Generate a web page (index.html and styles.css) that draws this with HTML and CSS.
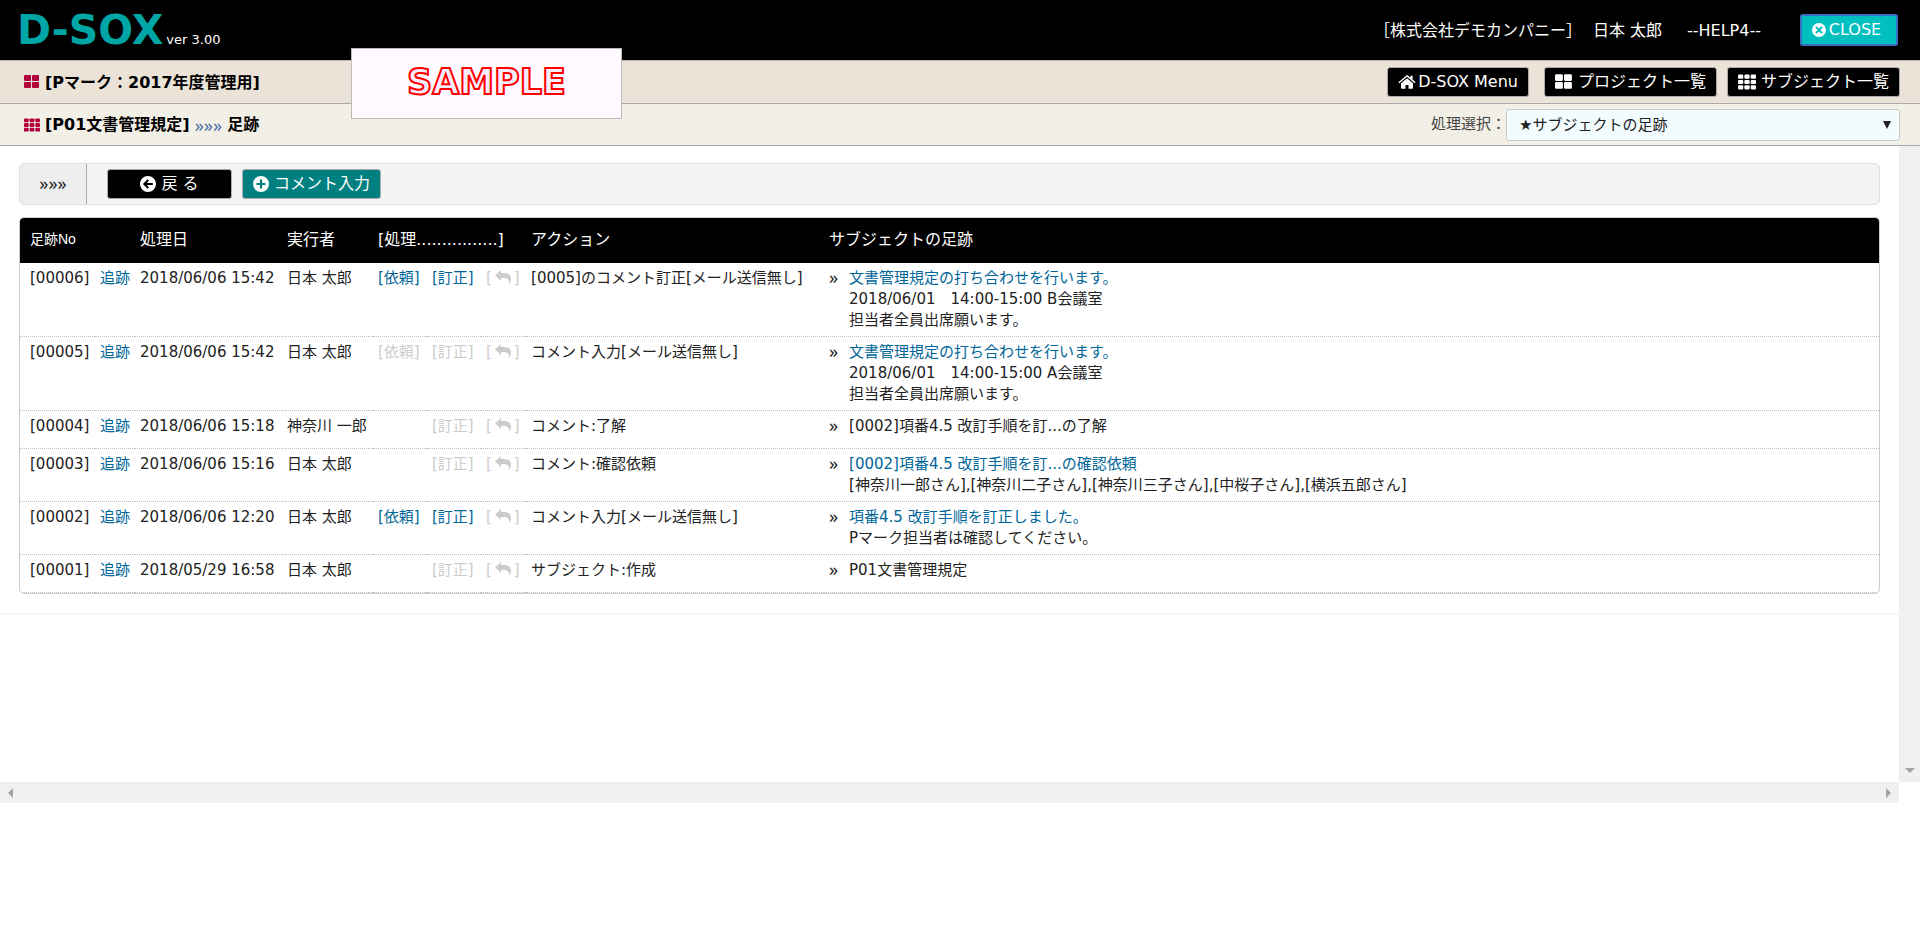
FILE: index.html
```html
<!DOCTYPE html>
<html lang="ja">
<head>
  <meta charset="utf-8">
  <title>D-SOX</title>
  <link rel="stylesheet" href="styles.css">
</head>
<body>
  <svg class="defs" width="0" height="0">
    <symbol id="i-large" viewBox="0 0 16 14">
      <rect x="0" y="0" width="7" height="6" rx="1"/><rect x="8" y="0" width="7" height="6" rx="1"/>
      <rect x="0" y="7" width="7" height="6" rx="1"/><rect x="8" y="7" width="7" height="6" rx="1"/>
    </symbol>
    <symbol id="i-grid" viewBox="0 0 17 14">
      <rect x="0" y="0" width="5" height="4" rx="1"/><rect x="6" y="0" width="5" height="4" rx="1"/><rect x="12" y="0" width="5" height="4" rx="1"/>
      <rect x="0" y="5" width="5" height="4" rx="1"/><rect x="6" y="5" width="5" height="4" rx="1"/><rect x="12" y="5" width="5" height="4" rx="1"/>
      <rect x="0" y="10" width="5" height="4" rx="1"/><rect x="6" y="10" width="5" height="4" rx="1"/><rect x="12" y="10" width="5" height="4" rx="1"/>
    </symbol>
    <symbol id="i-home" viewBox="0 0 18 14">
      <path d="M9 3.2 3 8.2V13q0 .8.8.8h3.700V9.900h3v3.900h3.700q.8 0 .8-.8V8.200z"/>
      <path d="M9 0 .4 7.200l.9 1L9 1.800l7.700 6.400.9-1L14.600 4.600V.7h-2.200v2.100L9.900.4Q9.400 0 9 0z"/>
    </symbol>
    <symbol id="i-close" viewBox="0 0 16 16">
      <path fill-rule="evenodd" d="M8 1a7 7 0 1 0 0 14A7 7 0 0 0 8 1zM5.600 4.200 8 6.600l2.400-2.400 1.400 1.400L9.400 8l2.400 2.400-1.400 1.400L8 9.400l-2.400 2.400-1.400-1.400L6.600 8 4.200 5.600z"/>
    </symbol>
    <symbol id="i-back" viewBox="0 0 16 16">
      <path fill-rule="evenodd" d="M8 0a8 8 0 1 0 0 16A8 8 0 0 0 8 0zM7.600 3.200l1.400 1.400L6.800 6.900h6v2.200h-6L9 11.400l-1.400 1.400L2.900 8z"/>
    </symbol>
    <symbol id="i-plus" viewBox="0 0 16 16">
      <path fill-rule="evenodd" d="M8 0a8 8 0 1 0 0 16A8 8 0 0 0 8 0zM6.900 3.500h2.200v3.400h3.400v2.200H9.100v3.400H6.900V9.100H3.500V6.900h3.400z"/>
    </symbol>
    <symbol id="i-reply" viewBox="0 0 16 14">
      <path d="M0 5.500 6 0v3h2.300C13.800 3 16 5 16 9c0 1.800-.8 3.500-2 4.800.4-3.400-.7-5.800-6-5.800H6v3z"/>
    </symbol>
  </svg>

  <header class="header">
    <div class="brand"><span class="logo">D-SOX</span><span class="version">ver 3.00</span></div>
    <div class="user">
      <span>［株式会社デモカンパニー］</span>
      <span>日本 太郎</span>
      <a href="#" class="help">--HELP4--</a>
      <button type="button" class="btn btn-close"><svg class="icon"><use href="#i-close"/></svg>CLOSE</button>
    </div>
  </header>

  <div class="bar project">
    <h1 class="title"><svg class="icon"><use href="#i-large"/></svg>[Pマーク：2017年度管理用]</h1>
    <nav class="menu">
      <button type="button" class="btn btn-menu"><svg class="icon icon-wide"><use href="#i-home"/></svg>D-SOX Menu</button>
      <button type="button" class="btn"><svg class="icon icon-wide"><use href="#i-large"/></svg>プロジェクト一覧</button>
      <button type="button" class="btn"><svg class="icon icon-wide"><use href="#i-grid"/></svg>サブジェクト一覧</button>
    </nav>
  </div>

  <div class="bar subject">
    <h2 class="title"><svg class="icon"><use href="#i-grid"/></svg>[P01文書管理規定]<span class="arrows">»»»</span>足跡</h2>
    <div class="process">
      <label for="process">処理選択：</label>
      <select id="process">
        <option>★サブジェクトの足跡</option>
      </select>
    </div>
  </div>

  <div class="sample">SAMPLE</div>

  <div class="frame">
    <main class="content">
      <div class="toolbar">
        <span class="toolbar-mark">»»»</span>
        <button type="button" class="btn btn-back"><svg class="icon"><use href="#i-back"/></svg>戻 る</button>
        <button type="button" class="btn btn-comment"><svg class="icon"><use href="#i-plus"/></svg>コメント入力</button>
      </div>

      <div class="panel">
        <table class="log">
          <colgroup>
            <col class="c-no"><col class="c-trace"><col class="c-date"><col class="c-user">
            <col class="c-op"><col class="c-op"><col class="c-reply"><col class="c-action"><col>
          </colgroup>
          <thead>
            <tr>
              <th colspan="2" class="small">足跡No</th>
              <th>処理日</th>
              <th>実行者</th>
              <th colspan="3">[処理................]</th>
              <th>アクション</th>
              <th>サブジェクトの足跡</th>
            </tr>
          </thead>
          <tbody>
            <tr>
              <td>[00006]</td>
              <td><a href="#">追跡</a></td>
              <td>2018/06/06 15:42</td>
              <td>日本 太郎</td>
              <td><a href="#">[依頼]</a></td>
              <td><a href="#">[訂正]</a></td>
              <td class="off">[<svg class="reply"><use href="#i-reply"/></svg>]</td>
              <td>[0005]のコメント訂正[メール送信無し]</td>
              <td><div class="note"><span>»</span><div><a href="#">文書管理規定の打ち合わせを行います。</a><br>2018/06/01　14:00-15:00 B会議室<br>担当者全員出席願います。</div></div></td>
            </tr>
            <tr>
              <td>[00005]</td>
              <td><a href="#">追跡</a></td>
              <td>2018/06/06 15:42</td>
              <td>日本 太郎</td>
              <td class="off">[依頼]</td>
              <td class="off">[訂正]</td>
              <td class="off">[<svg class="reply"><use href="#i-reply"/></svg>]</td>
              <td>コメント入力[メール送信無し]</td>
              <td><div class="note"><span>»</span><div><a href="#">文書管理規定の打ち合わせを行います。</a><br>2018/06/01　14:00-15:00 A会議室<br>担当者全員出席願います。</div></div></td>
            </tr>
            <tr>
              <td>[00004]</td>
              <td><a href="#">追跡</a></td>
              <td>2018/06/06 15:18</td>
              <td>神奈川 一郎</td>
              <td></td>
              <td class="off">[訂正]</td>
              <td class="off">[<svg class="reply"><use href="#i-reply"/></svg>]</td>
              <td>コメント:了解</td>
              <td><div class="note"><span>»</span><div>[0002]項番4.5 改訂手順を訂...の了解</div></div></td>
            </tr>
            <tr>
              <td>[00003]</td>
              <td><a href="#">追跡</a></td>
              <td>2018/06/06 15:16</td>
              <td>日本 太郎</td>
              <td></td>
              <td class="off">[訂正]</td>
              <td class="off">[<svg class="reply"><use href="#i-reply"/></svg>]</td>
              <td>コメント:確認依頼</td>
              <td><div class="note"><span>»</span><div><a href="#">[0002]項番4.5 改訂手順を訂...の確認依頼</a><br>[神奈川一郎さん],[神奈川二子さん],[神奈川三子さん],[中桜子さん],[横浜五郎さん]</div></div></td>
            </tr>
            <tr>
              <td>[00002]</td>
              <td><a href="#">追跡</a></td>
              <td>2018/06/06 12:20</td>
              <td>日本 太郎</td>
              <td><a href="#">[依頼]</a></td>
              <td><a href="#">[訂正]</a></td>
              <td class="off">[<svg class="reply"><use href="#i-reply"/></svg>]</td>
              <td>コメント入力[メール送信無し]</td>
              <td><div class="note"><span>»</span><div><a href="#">項番4.5 改訂手順を訂正しました。</a><br>Pマーク担当者は確認してください。</div></div></td>
            </tr>
            <tr>
              <td>[00001]</td>
              <td><a href="#">追跡</a></td>
              <td>2018/05/29 16:58</td>
              <td>日本 太郎</td>
              <td></td>
              <td class="off">[訂正]</td>
              <td class="off">[<svg class="reply"><use href="#i-reply"/></svg>]</td>
              <td>サブジェクト:作成</td>
              <td><div class="note"><span>»</span><div>P01文書管理規定</div></div></td>
            </tr>
          </tbody>
        </table>
      </div>
    </main>
    <div class="scroll-v"><i class="tri tri-down"></i></div>
    <div class="scroll-h"><i class="tri tri-left"></i><i class="tri tri-right"></i></div>
  </div>
</body>
</html>
```
FILE: styles.css
```css
* {
  box-sizing: border-box;
}

body {
  margin: 0;
  background: #fff;
  color: #222;
  font-family: "DejaVu Sans", "Noto Sans CJK JP", sans-serif;
  font-size: 15px;
  line-height: 21px;
}

a {
  color: #006699;
  text-decoration: none;
}

.defs {
  display: block;
}

.icon {
  width: 16px;
  height: 16px;
  flex: none;
  fill: currentColor;
}

.icon-wide {
  width: 18px;
}

/* header */
.header {
  display: flex;
  justify-content: space-between;
  align-items: center;
  height: 61px;
  padding: 0 22px 0 17px;
  background: #000;
  border-bottom: 1px solid #bbb;
  color: #fff;
  font-size: 16px;
}

.brand {
  display: flex;
  align-items: baseline;
  gap: 3px;
}

.logo {
  color: #00a5a5;
  font-size: 41px;
  font-weight: bold;
  line-height: 60px;
}

.version {
  font-size: 13px;
}

.user {
  display: flex;
  align-items: center;
  gap: 11px;
}

.help {
  margin: 0 28px 0 14px;
  color: #fff;
}

/* buttons */
.btn {
  display: flex;
  align-items: center;
  justify-content: center;
  gap: 5px;
  height: 30px;
  padding: 0 10px;
  border: 1px solid #aaa;
  border-radius: 3px;
  background: #000;
  color: #fff;
  font-family: inherit;
  font-size: 16px;
  line-height: 24px;
  white-space: nowrap;
  cursor: pointer;
}

.btn-close {
  width: 98px;
  height: 32px;
  gap: 2px;
  padding: 0 14px 0 8px;
  border: 2px solid #3b6fc4;
  background: #00bfbf;
}

.btn-menu {
  gap: 2px;
  margin-right: 5px;
}

/* title bars */
.bar {
  display: flex;
  justify-content: space-between;
  align-items: center;
  padding: 0 20px 0 24px;
  border-bottom: 1px solid #aaa;
}

.project {
  height: 43px;
  background: #ebe3d7;
}

.subject {
  height: 42px;
  background: #f2efe7;
}

.title {
  display: flex;
  align-items: center;
  gap: 5px;
  margin: 0;
  color: #000;
  font-size: 16px;
}

.title .icon {
  color: #b0003a;
}

.arrows,
.toolbar-mark,
.note span {
  font-family: "Noto Sans", sans-serif;
  font-size: 18px;
  line-height: 18px;
}

.arrows {
  color: #4a6ea8;
  font-weight: normal;
}

.menu {
  display: flex;
  gap: 10px;
}

.process {
  display: flex;
  align-items: center;
  color: #444;
}

.process select {
  appearance: none;
  width: 394px;
  height: 32px;
  padding: 0 12px;
  border: 1px solid #ccc;
  border-radius: 3px;
  background: #f2fcff url("data:image/svg+xml,%3Csvg xmlns='http://www.w3.org/2000/svg' width='8' height='8'%3E%3Cpath d='M0 0h8L4 8z' fill='%23222'/%3E%3C/svg%3E") no-repeat right 8px center;
  color: #222;
  font-family: inherit;
  font-size: 15px;
}

.sample {
  position: absolute;
  top: 48px;
  left: 351px;
  width: 271px;
  height: 71px;
  border: 1px solid #bbb;
  background: #fffaff;
  color: #f4ecff;
  font-size: 35px;
  font-weight: bold;
  line-height: 66px;
  text-align: center;
  -webkit-text-stroke: 2px #f00;
}

/* content frame with its scroll tracks */
.frame {
  display: grid;
  grid-template-columns: 1fr 21px;
  grid-template-rows: minmax(636px, auto) 21px;
}

.content {
  padding: 17px 19px 0;
}

.content::after {
  content: "";
  display: block;
  margin: 19px -19px 0;
  border-top: 2px solid #f5f5f5;
}

.scroll-v,
.scroll-h {
  display: flex;
  background: #f0f0f0;
}

.scroll-v {
  align-items: flex-end;
  justify-content: center;
  padding-bottom: 9px;
}

.scroll-h {
  align-items: center;
  justify-content: space-between;
  padding: 0 8px;
}

.tri {
  border: 5px solid transparent;
}

.tri-down {
  border-top-color: #a3a3a3;
  border-bottom: 0;
}

.tri-left {
  border-right-color: #a3a3a3;
  border-left: 0;
}

.tri-right {
  border-left-color: #a3a3a3;
  border-right: 0;
}

.toolbar {
  display: flex;
  align-items: center;
  height: 42px;
  border: 1px solid #ddd;
  border-radius: 5px;
  background: #f4f4f4;
}

.toolbar-mark {
  display: flex;
  align-items: center;
  justify-content: center;
  align-self: stretch;
  width: 67px;
  margin-right: 20px;
  padding-bottom: 3px;
  border-right: 1px solid #aaa;
  background: #eee;
}

.btn-back {
  width: 125px;
  margin-right: 10px;
}

.btn-comment {
  background: #008080;
}

/* footprint table */
.panel {
  margin-top: 12px;
  border: 1px solid #ccc;
  border-radius: 5px;
  overflow: hidden;
}

.log {
  width: 100%;
  table-layout: fixed;
  border-collapse: separate;
  border-spacing: 0;
}

.log th {
  height: 45px;
  padding: 0 5px 2px;
  background: #000;
  color: #fff;
  font-size: 16px;
  font-weight: normal;
  text-align: left;
  white-space: nowrap;
}

.log .small {
  font-family: "Liberation Sans", "Noto Sans CJK JP", sans-serif;
  font-size: 14px;
}

.log td {
  height: 38px;
  padding: 5px 0 5px 5px;
  border-bottom: 1px dotted #bbb;
  vertical-align: top;
  white-space: nowrap;
}

.log th:first-child,
.log td:first-child {
  padding-left: 10px;
}

.log .off {
  color: #ccc;
}

.c-no { width: 75px; }
.c-trace { width: 40px; }
.c-date { width: 147px; }
.c-user { width: 91px; }
.c-op { width: 54px; }
.c-reply { width: 45px; }
.c-action { width: 298px; }

.reply {
  width: 16px;
  height: 14px;
  margin: 0 3px;
  vertical-align: -1px;
  fill: currentColor;
}

.note {
  display: flex;
}

.note span {
  width: 20px;
}
```
